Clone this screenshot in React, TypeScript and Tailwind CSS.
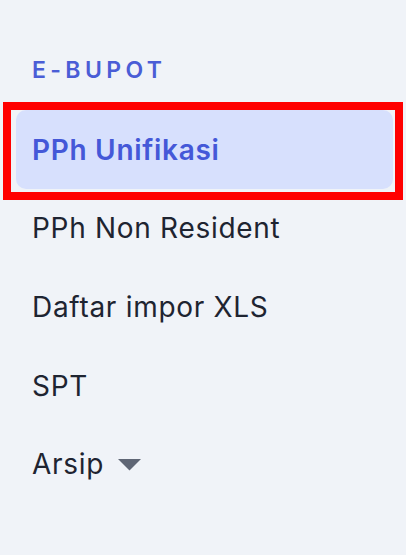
import React from "react";

const items = ["PPh Non Resident", "Daftar impor XLS", "SPT"];

export default function App() {
  return (
    <div className="min-h-screen bg-[#f0f3f8] font-['Inter','Noto_Sans',sans-serif]">
      {/* Section heading */}
      <div className="pl-8 pt-[54px] text-[23px] leading-[32px] font-semibold tracking-[0.19em] text-[#4a5dd6]">
        E-BUPOT
      </div>

      <nav className="mt-6 flex flex-col">
        {/* Active item, with highlight frame */}
        <div className="relative mx-4 mr-[13px]">
          <div className="flex h-[79px] items-center rounded-[10px] bg-[#d7e0fd] px-4 text-[28px] leading-[40px] font-semibold tracking-[0.025em] text-[#4458d8]">
            PPh Unifikasi
          </div>
          <div className="pointer-events-none absolute -left-[13px] -top-[8px] -right-[10px] -bottom-[11px] border-[8px] border-[#ff0000]" />
        </div>

        {items.map((label) => (
          <div
            key={label}
            className="mx-4 flex h-[78.7px] items-center px-4 text-[28px] leading-[40px] tracking-[0.025em] text-[#1e2431]"
          >
            {label}
          </div>
        ))}

        <div className="mx-4 flex h-[78.7px] items-center gap-[14px] px-4 text-[28px] leading-[40px] tracking-[0.025em] text-[#1e2431]">
          <span>Arsip</span>
          <svg width="23" height="12" viewBox="0 0 23 12" className="mt-[2px]">
            <path d="M0 0 H23 L11.5 11.5 Z" fill="#5f6675" />
          </svg>
        </div>
      </nav>
    </div>
  );
}
